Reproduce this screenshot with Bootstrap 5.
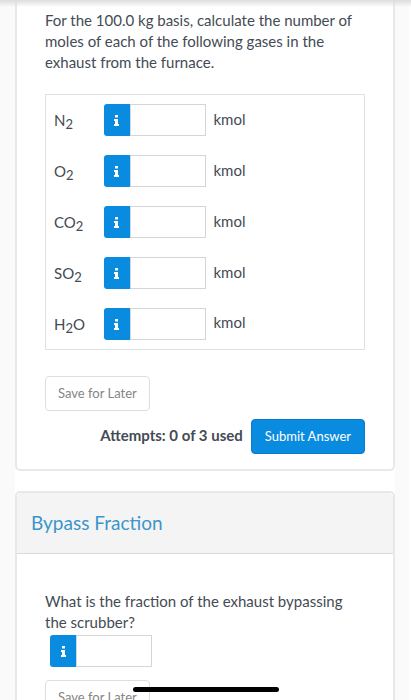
<!DOCTYPE html>
<html lang="en">
<head>
<meta charset="utf-8">
<meta name="viewport" content="width=device-width, initial-scale=1">
<title>Bypass Fraction</title>
<link href="https://cdn.jsdelivr.net/npm/bootstrap@5.3.0/dist/css/bootstrap.min.css" rel="stylesheet">
<style>
body{font-family:Lato,sans-serif;font-size:15px;line-height:21px;color:#444b54;background:#fafafa}
.page-shell{border-right:2px solid #fff;padding:0 14px 0 15px}
.top-shade{height:7px;background:linear-gradient(#dcdcdc,rgba(230,230,230,0))}
.q-column{background:#fff}
.q-card{border:2px solid #e8e8e8;border-radius:5px;--bs-card-color:#444b54}
.q-first{border-top:0;border-top-left-radius:0;border-top-right-radius:0;margin-bottom:20px}
.q-body{padding:10px 28px 15px}
.q-second .q-body{padding-top:37px}
.q-header{background:#f4f4f4;border-bottom:1px solid #d9dcde;padding:17px 14px 18px}
.q-title{font-size:19px;line-height:25px;font-weight:400;color:#3b96cb}
.gas-table{border:1px solid #dfe1e3;margin:21px 0 26px;line-height:20px;width:100%}
.gas-table td,.gas-table th{padding:9px 0;height:51px;font-weight:400;vertical-align:middle}
.gas-table th{width:58px;padding:9px 0 9px 8px}
.gas-table .answer-cell{width:110px}
.gas-table .unit{padding-bottom:12px}
sub{font-size:13px;bottom:-3px;line-height:0}
.answer{width:102px}
.info-btn{width:26px;height:32px;background:#098be0;border:0;padding:0 0 3px;border-radius:3px 0 0 3px}
.answer .form-control{height:32px;border:1px solid #d3d6d8;border-radius:0;padding:4px;font-size:15px}
.save-btn,.submit-btn{font-size:13px;line-height:21px;padding:6px 12px;border-radius:4px}
.save-btn{border:1px solid #dedede;color:#858585;background:#fff}
.submit-btn{border:1px solid #087cca;background:#098be0;color:#fff;padding:6px 13px}
.save-row{margin-bottom:8px}
.attempts{font-weight:700;padding-bottom:3px}
.single-answer{margin:2px 0 13px 5px}
.home-bar{width:146px;height:5px;border-radius:3px;background:#000;margin-bottom:8px;left:50%;transform:translateX(-50%)}
</style>
<script src="https://cdn.jsdelivr.net/npm/bootstrap@5.3.0/dist/js/bootstrap.bundle.min.js"></script>
</head>
<body>
<div class="page-shell vh-100 overflow-hidden">
<div class="top-shade fixed-top"></div>
<main class="q-column">
  <section class="card q-card q-first">
    <div class="card-body q-body">
      <p class="mb-0">For the 100.0 kg basis, calculate the number of moles of each of the following gases in the exhaust from the furnace.</p>
      <table class="gas-table">
        <tbody>
          <tr><th scope="row"><label for="n2">N<sub>2</sub></label></th><td class="answer-cell"><div class="answer d-flex"><button type="button" class="btn info-btn flex-shrink-0" aria-label="Information"><svg width="7" height="11" viewBox="0 0 7 11" fill="#fff"><path d="M2 0h3v2.5H2zM1 4h4v5h1v2H1V9h1V6H1z"/></svg></button><input id="n2" class="form-control" type="text"></div></td><td class="unit">kmol</td></tr>
          <tr><th scope="row"><label for="o2">O<sub>2</sub></label></th><td><div class="answer d-flex"><button type="button" class="btn info-btn flex-shrink-0" aria-label="Information"><svg width="7" height="11" viewBox="0 0 7 11" fill="#fff"><path d="M2 0h3v2.5H2zM1 4h4v5h1v2H1V9h1V6H1z"/></svg></button><input id="o2" class="form-control" type="text"></div></td><td class="unit">kmol</td></tr>
          <tr><th scope="row"><label for="co2">CO<sub>2</sub></label></th><td><div class="answer d-flex"><button type="button" class="btn info-btn flex-shrink-0" aria-label="Information"><svg width="7" height="11" viewBox="0 0 7 11" fill="#fff"><path d="M2 0h3v2.5H2zM1 4h4v5h1v2H1V9h1V6H1z"/></svg></button><input id="co2" class="form-control" type="text"></div></td><td class="unit">kmol</td></tr>
          <tr><th scope="row"><label for="so2">SO<sub>2</sub></label></th><td><div class="answer d-flex"><button type="button" class="btn info-btn flex-shrink-0" aria-label="Information"><svg width="7" height="11" viewBox="0 0 7 11" fill="#fff"><path d="M2 0h3v2.5H2zM1 4h4v5h1v2H1V9h1V6H1z"/></svg></button><input id="so2" class="form-control" type="text"></div></td><td class="unit">kmol</td></tr>
          <tr><th scope="row"><label for="h2o">H<sub>2</sub>O</label></th><td><div class="answer d-flex"><button type="button" class="btn info-btn flex-shrink-0" aria-label="Information"><svg width="7" height="11" viewBox="0 0 7 11" fill="#fff"><path d="M2 0h3v2.5H2zM1 4h4v5h1v2H1V9h1V6H1z"/></svg></button><input id="h2o" class="form-control" type="text"></div></td><td class="unit">kmol</td></tr>
        </tbody>
      </table>
      <div class="save-row d-flex"><button type="button" class="btn save-btn">Save for Later</button></div>
      <div class="d-flex justify-content-end align-items-center gap-2"><span class="attempts">Attempts: 0 of 3 used</span><button type="submit" class="btn submit-btn">Submit Answer</button></div>
    </div>
  </section>
  <section class="card q-card q-second">
    <div class="card-header q-header"><h2 class="q-title mb-0">Bypass Fraction</h2></div>
    <div class="card-body q-body">
      <label for="bypass" class="d-block">What is the fraction of the exhaust bypassing the scrubber?</label>
      <div class="answer single-answer d-flex"><button type="button" class="btn info-btn flex-shrink-0" aria-label="Information"><svg width="7" height="11" viewBox="0 0 7 11" fill="#fff"><path d="M2 0h3v2.5H2zM1 4h4v5h1v2H1V9h1V6H1z"/></svg></button><input id="bypass" class="form-control" type="text"></div>
      <div class="d-flex"><button type="button" class="btn save-btn">Save for Later</button></div>
    </div>
  </section>
</main>
<div class="home-bar position-fixed bottom-0"></div>
</div>
</body>
</html>
